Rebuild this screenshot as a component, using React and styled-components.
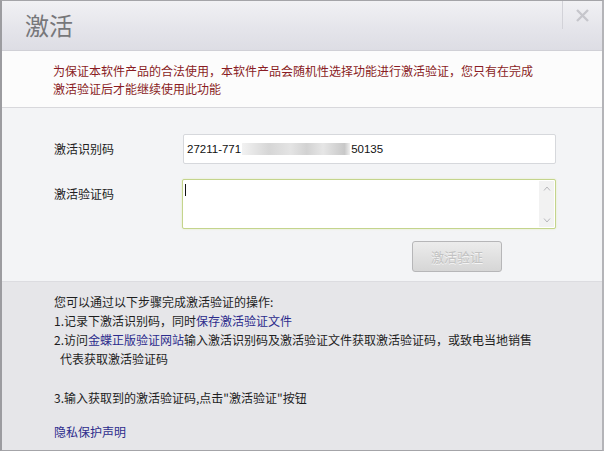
import styled, { createGlobalStyle } from "styled-components";

const Global = createGlobalStyle`
  html, body {
    margin: 0;
    padding: 0;
    background: #ffffff;
  }
  * {
    box-sizing: border-box;
  }
`;

const Dialog = styled.div`
  width: 604px;
  height: 451px;
  display: flex;
  flex-direction: column;
  border: 1px solid #a4a4a8;
  border-left: 2px solid #9c9ca0;
  border-right: 2px solid #b4b4b8;
  overflow: hidden;
  font-family: "Noto Sans CJK SC", "Liberation Sans", sans-serif;
`;

const TitleBar = styled.div`
  height: 50px;
  flex-shrink: 0;
  display: flex;
  align-items: flex-start;
  justify-content: space-between;
  background: linear-gradient(#f1f1f4, #e4e4ea 60%, #dddde4);
  border-bottom: 1px solid #d0d0d6;
`;

const Title = styled.h1`
  margin: 0;
  padding: 8px 0 0 23px;
  font-size: 24px;
  font-weight: 400;
  line-height: 32px;
  color: #77777a;
`;

const CloseButton = styled.button`
  width: 40px;
  height: 28px;
  border: none;
  border-left: 1px solid #d2d2d8;
  background: transparent;
  padding: 0;
  display: flex;
  align-items: center;
  justify-content: center;
  cursor: pointer;
`;

const Notice = styled.div`
  height: 57px;
  flex-shrink: 0;
  padding: 11px 0 0 51px;
  background: #fcfcfc;
  border-bottom: 1px solid #d8d8dc;
  color: #8a1c24;
  font-size: 12px;
  line-height: 18px;
`;

const Form = styled.div`
  height: 174px;
  flex-shrink: 0;
  background: #f3f4f6;
  border-bottom: 1px solid #dcdce0;
  padding: 26px 46px 0 52px;
  display: flex;
  flex-direction: column;
`;

const Row = styled.div`
  display: flex;
  align-items: ${(p) => (p.$top ? "flex-start" : "center")};
  margin-bottom: ${(p) => p.$gap || 0}px;
`;

const Label = styled.div`
  width: 129px;
  font-size: 12px;
  line-height: 16px;
  color: #222;
  padding-top: ${(p) => p.$pt || 0}px;
`;

const Field = styled.div`
  flex: 1;
  height: 30px;
  background: #ffffff;
  border: 1px solid #d6d8dc;
  border-radius: 2px;
  display: flex;
  align-items: center;
  padding-left: 3px;
  font-family: "Liberation Sans", "DejaVu Sans", sans-serif;
  font-size: 11.5px;
  color: #111;
`;

const Blur = styled.span`
  display: inline-block;
  width: 108px;
  height: 12px;
  margin: 0 1px;
  background: linear-gradient(
    90deg,
    #f2f2f2 0%,
    #d6d6d6 25%,
    #e4e4e4 45%,
    #d2d2d2 60%,
    #e6e6e6 75%,
    #c8c8c8 95%,
    #f0f0f0 100%
  );
`;

const Area = styled.div`
  flex: 1;
  height: 50px;
  margin-left: -1px;
  background: #ffffff;
  border: 1px solid #c4d48c;
  border-radius: 2px;
  box-shadow: 0 0 2px #e0ecb8;
  display: flex;
  justify-content: space-between;
`;

const Caret = styled.span`
  width: 1px;
  height: 12px;
  margin: 4px 0 0 2px;
  background: #111;
`;

const Scroll = styled.div`
  width: 15px;
  margin: 1px 1px 1px 0;
  background: #f2f2f2;
  display: flex;
  flex-direction: column;
  justify-content: space-between;
  align-items: center;
  padding: 5px 0 4px;
`;

const ButtonRow = styled.div`
  display: flex;
  justify-content: flex-end;
  padding: 12px 54px 0 0;
`;

const ActivateButton = styled.button`
  width: 90px;
  height: 31px;
  border: 1px solid #b6b6b8;
  border-radius: 3px;
  background: linear-gradient(#ececec, #d6d6d6);
  color: #c2c2c2;
  text-shadow: 0 1px 0 #f6f6f6;
  font-family: "Noto Sans CJK SC", sans-serif;
  font-size: 13px;
  padding: 0;
`;

const Help = styled.div`
  flex: 1;
  background: #e6e6e9;
  padding: 10px 0 0 52px;
  font-size: 12px;
  line-height: 19px;
  color: #1e1e1e;
`;

const Line = styled.div`
  padding-left: ${(p) => p.$indent || 0}px;
  margin-top: ${(p) => p.$mt || 0}px;
`;

const Link = styled.a`
  color: #2c2c8c;
  text-decoration: none;
`;

const Privacy = styled(Link)`
  display: block;
  margin-top: 15px;
`;

export default function App() {
  return (
    <>
      <Global />
      <Dialog>
        <TitleBar>
          <Title>激活</Title>
          <CloseButton>
            <svg width="15" height="15" viewBox="0 0 15 15">
              <path
                d="M2 2 L13 13 M13 2 L2 13"
                stroke="#c6c6cc"
                strokeWidth="2.4"
              />
            </svg>
          </CloseButton>
        </TitleBar>

        <Notice>
          为保证本软件产品的合法使用，本软件产品会随机性选择功能进行激活验证，您只有在完成
          <br />
          激活验证后才能继续使用此功能
        </Notice>

        <Form>
          <Row $gap={15}>
            <Label>激活识别码</Label>
            <Field>
              27211-771
              <Blur />
              50135
            </Field>
          </Row>
          <Row $top>
            <Label $pt={7}>激活验证码</Label>
            <Area>
              <Caret />
              <Scroll>
                <svg width="8" height="5" viewBox="0 0 8 5">
                  <path d="M1 4.5 L4 1 L7 4.5" stroke="#b8b8bc" fill="none" />
                </svg>
                <svg width="8" height="5" viewBox="0 0 8 5">
                  <path d="M1 0.5 L4 4 L7 0.5" stroke="#b8b8bc" fill="none" />
                </svg>
              </Scroll>
            </Area>
          </Row>
          <ButtonRow>
            <ActivateButton disabled>激活验证</ActivateButton>
          </ButtonRow>
        </Form>

        <Help>
          <Line>您可以通过以下步骤完成激活验证的操作:</Line>
          <Line>
            1.记录下激活识别码，同时<Link>保存激活验证文件</Link>
          </Line>
          <Line>
            2.访问<Link>金蝶正版验证网站</Link>
            输入激活识别码及激活验证文件获取激活验证码，或致电当地销售
          </Line>
          <Line $indent={6}>代表获取激活验证码</Line>
          <Line $mt={20}>3.输入获取到的激活验证码,点击"激活验证"按钮</Line>
          <Privacy>隐私保护声明</Privacy>
        </Help>
      </Dialog>
    </>
  );
}
